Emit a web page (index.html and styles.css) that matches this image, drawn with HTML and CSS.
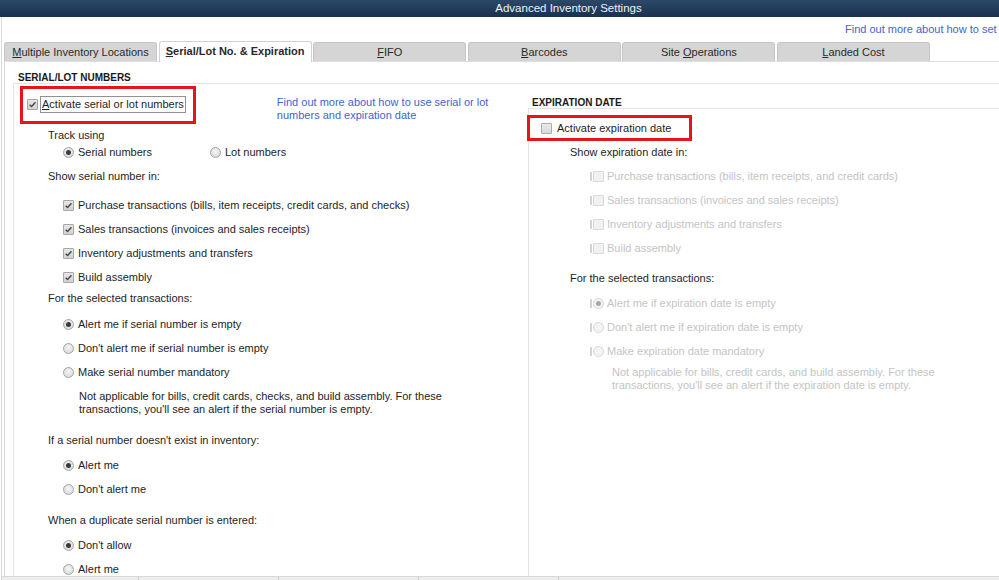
FILE: index.html
```html
<!DOCTYPE html>
<html lang="en">
<head>
    <meta charset="UTF-8">
    <title>Advanced Inventory Settings</title>
    <link rel="stylesheet" href="styles.css">
</head>
<body>
<div class="window">
    <div class="titlebar">Advanced Inventory Settings</div>
    <div class="frame">
        <div class="helpbar"><a href="#" class="link">Find out more about how to set</a></div>

        <div class="tabs">
            <div class="tab"><u>M</u>ultiple Inventory Locations</div>
            <div class="tab active"><u>S</u>erial/Lot No. &amp; Expiration</div>
            <div class="tab"><u>F</u>IFO</div>
            <div class="tab"><u>B</u>arcodes</div>
            <div class="tab">Site <u>O</u>perations</div>
            <div class="tab"><u>L</u>anded Cost</div>
        </div>

        <div class="panel">
            <div class="group-title">SERIAL/LOT NUMBERS</div>
            <div class="group">
                <!-- serial / lot numbers -->
                <div class="col-left">
                    <div class="top-row">
                        <div class="highlight">
                            <div class="opt"><span class="cb"><svg viewBox="0 0 10 10"><path d="M1.8 5.2 4 7.3 8.3 2.6"/></svg></span><span class="focus"><u>A</u>ctivate serial or lot numbers</span></div>
                        </div>
                        <a href="#" class="link help">Find out more about how to use serial or lot<br>numbers and expiration date</a>
                    </div>

                    <div class="heading mt-3">Track using</div>
                    <div class="radio-line mt-1">
                        <div class="opt wide"><span class="rb on"></span>Serial numbers</div>
                        <div class="opt"><span class="rb"></span>Lot numbers</div>
                    </div>

                    <div class="heading mt-8">Show serial number in:</div>
                    <div class="options mt-9">
                        <div class="opt"><span class="cb"><svg viewBox="0 0 10 10"><path d="M1.8 5.2 4 7.3 8.3 2.6"/></svg></span>Purchase transactions (bills, item receipts, credit cards, and checks)</div>
                        <div class="opt"><span class="cb"><svg viewBox="0 0 10 10"><path d="M1.8 5.2 4 7.3 8.3 2.6"/></svg></span>Sales transactions (invoices and sales receipts)</div>
                        <div class="opt"><span class="cb"><svg viewBox="0 0 10 10"><path d="M1.8 5.2 4 7.3 8.3 2.6"/></svg></span>Inventory adjustments and transfers</div>
                        <div class="opt"><span class="cb"><svg viewBox="0 0 10 10"><path d="M1.8 5.2 4 7.3 8.3 2.6"/></svg></span>Build assembly</div>
                    </div>

                    <div class="heading mt-1">For the selected transactions:</div>
                    <div class="options mt-6">
                        <div class="opt"><span class="rb on"></span>Alert me if serial number is empty</div>
                        <div class="opt"><span class="rb"></span>Don't alert me if serial number is empty</div>
                        <div class="opt"><span class="rb"></span>Make serial number mandatory</div>
                    </div>
                    <div class="note mt-6">Not applicable for bills, credit cards, checks, and build assembly. For these<br>transactions, you'll see an alert if the serial number is empty.</div>

                    <div class="heading mt-16">If a serial number doesn't exist in inventory:</div>
                    <div class="options mt-5">
                        <div class="opt"><span class="rb on"></span>Alert me</div>
                        <div class="opt"><span class="rb"></span>Don't alert me</div>
                    </div>

                    <div class="heading mt-11">When a duplicate serial number is entered:</div>
                    <div class="options mt-5">
                        <div class="opt"><span class="rb on"></span>Don't allow</div>
                        <div class="opt"><span class="rb"></span>Alert me</div>
                    </div>
                </div>

                <!-- expiration date -->
                <div class="col-right">
                    <div class="group-title">EXPIRATION DATE</div>
                    <div class="subgroup">
                        <div class="highlight">
                            <div class="opt"><span class="cb"></span>Activate expiration date</div>
                        </div>

                        <div class="heading mt-3">Show expiration date in:</div>
                        <div class="options dis mt-4">
                            <div class="opt"><span class="stub"></span><span class="cb"></span>Purchase transactions (bills, item receipts, and credit cards)</div>
                            <div class="opt"><span class="stub"></span><span class="cb"></span>Sales transactions (invoices and sales receipts)</div>
                            <div class="opt"><span class="stub"></span><span class="cb"></span>Inventory adjustments and transfers</div>
                            <div class="opt"><span class="stub"></span><span class="cb"></span>Build assembly</div>
                        </div>

                        <div class="heading mt-10">For the selected transactions:</div>
                        <div class="options dis mt-5">
                            <div class="opt"><span class="stub"></span><span class="rb on"></span>Alert me if expiration date is empty</div>
                            <div class="opt"><span class="stub"></span><span class="rb"></span>Don't alert me if expiration date is empty</div>
                            <div class="opt"><span class="stub"></span><span class="rb"></span>Make expiration date mandatory</div>
                        </div>
                        <div class="note dis mt-3">Not applicable for bills, credit cards, and build assembly. For these<br>transactions, you'll see an alert if the expiration date is empty.</div>
                    </div>
                </div>
            </div>
        </div>

        <div class="statusbar">
            <span class="cell first"></span>
            <span class="cell"></span>
            <span class="cell"></span>
            <span class="cell"></span>
            <span class="cell last"></span>
        </div>
    </div>
</div>
</body>
</html>
```

FILE: styles.css
```css
* {
    box-sizing: border-box;
}
html, body {
    margin: 0;
    padding: 0;
}
body {
    font-family: "Liberation Sans", Arial, sans-serif;
    font-size: 11px;
    color: #1e1e1e;
    background: #fff;
    overflow: hidden;
}
.window {
    width: 999px;
    height: 580px;
    display: flex;
    flex-direction: column;
    overflow: hidden;
}
.titlebar {
    height: 17px;
    flex: none;
    background: linear-gradient(#2c4868, #1a3150);
    color: #eef2f7;
    font-size: 11.5px;
    line-height: 17px;
    text-align: center;
    padding-left: 138px;
    white-space: nowrap;
}
.frame {
    flex: 1;
    min-height: 0;
    display: flex;
    flex-direction: column;
    margin-left: 1px;
    border-left: 1px solid #d5d9de;
}
.helpbar {
    height: 24px;
    flex: none;
    line-height: 24px;
    padding-left: 843px;
    white-space: nowrap;
    overflow: hidden;
}
.link {
    color: #3e64d3;
    text-decoration: none;
}

/* tabs */
.tabs {
    height: 20px;
    flex: none;
    display: flex;
    align-items: flex-end;
    gap: 1.6px;
    margin-left: 2px;
    position: relative;
    z-index: 1;
}
.tab {
    width: 153px;
    height: 19px;
    line-height: 18px;
    text-align: center;
    background: #d5d5d5;
    border: 1px solid #c6c6c6;
    border-bottom: none;
    border-radius: 3px 3px 0 0;
    color: #2a2a2a;
    white-space: nowrap;
}
.tab.active {
    height: 21px;
    margin-bottom: -1px;
    background: #fff;
    border-color: #d2d2d2;
    font-weight: bold;
    line-height: 19px;
}

/* panel */
.panel {
    flex: 1;
    min-height: 0;
    margin-left: 2px;
    border-left: 1px solid #d6d6d6;
    border-top: 1px solid #dedede;
    display: flex;
    flex-direction: column;
    overflow: hidden;
}
.group-title {
    margin: 10px 0 0 8px;
    padding-left: 5px;
    font-size: 10px;
    font-weight: bold;
    line-height: 11px;
    color: #1a1a1a;
}
.group {
    flex: 1;
    min-height: 0;
    margin-left: 8px;
    border-top: 1px solid #e3e3e3;
    border-left: 1px solid #e3e3e3;
    display: flex;
}
.col-left {
    width: 514px;
    flex: none;
}
.col-right {
    flex: 1;
    display: flex;
    flex-direction: column;
    padding-top: 14px;
}
.col-right .group-title {
    margin: 0;
    padding-left: 4px;
    line-height: 10px;
}
.subgroup {
    flex: 1;
    border-top: 1px solid #e3e3e3;
    border-left: 1px solid #e3e3e3;
}

.highlight {
    border: 3px solid #e8141c;
    width: fit-content;
}
.top-row {
    display: flex;
    align-items: flex-start;
    margin: 2px 0 0 6px;
}
.top-row .highlight {
    padding: 7px 7px 8px 4px;
}
.top-row .opt {
    height: 17px;
}
.top-row .cb {
    margin-right: 2px;
}
.focus {
    border: 1px solid #929292;
    padding: 0 1px;
    height: 17px;
    line-height: 15px;
}
.help {
    margin: 10px 0 0 81px;
    line-height: 13px;
}
.subgroup .highlight {
    margin: 6px 0 0 -2px;
    padding: 0 18px 0 11px;
}
.subgroup .highlight .opt {
    height: 20px;
}
.subgroup .highlight .cb {
    margin-right: 5px;
    background: linear-gradient(#eaeaea, #d9d9d9);
    border-color: #adadad;
}

/* rows */
.heading {
    line-height: 16px;
}
.col-left .heading {
    padding-left: 34px;
}
.col-right .heading {
    padding-left: 41px;
}
.col-left .options,
.radio-line {
    padding-left: 49px;
}
.col-right .options {
    padding-left: 61px;
}
.radio-line {
    display: flex;
    height: 16px;
}
.opt {
    display: flex;
    align-items: center;
    height: 24px;
    white-space: nowrap;
}
.radio-line .opt {
    height: 16px;
}
.radio-line .wide {
    width: 147px;
}
.note {
    line-height: 13px;
    white-space: nowrap;
}
.col-left .note {
    padding-left: 65px;
}
.col-right .note {
    padding-left: 83px;
}

/* checkbox + radio */
.cb {
    width: 11px;
    height: 11px;
    flex: none;
    margin-right: 4px;
    border: 1px solid #a7a7a7;
    border-radius: 1px;
    background: linear-gradient(#e6e6e6, #d3d3d3);
    display: flex;
    align-items: center;
    justify-content: center;
}
.cb svg {
    width: 9px;
    height: 9px;
    fill: none;
    stroke: #474747;
    stroke-width: 1.6;
}
.rb {
    width: 11px;
    height: 11px;
    flex: none;
    margin-right: 4px;
    border: 1px solid #a5a5a5;
    border-radius: 50%;
    background: radial-gradient(circle at 50% 40%, #f7f7f7, #d2d2d2);
    display: flex;
    align-items: center;
    justify-content: center;
}
.rb.on::after {
    content: "";
    width: 5px;
    height: 5px;
    border-radius: 50%;
    background: #3a3a3a;
}

/* disabled */
.dis {
    color: #c4c4c4;
}
.dis .cb {
    margin-right: 3px;
    border-color: #d9d9d9;
    background: #f1f1f1;
}
.dis .rb {
    margin-right: 3px;
    border-color: #d7d7d7;
    background: #f3f3f3;
}
.dis .rb.on::after {
    background: #a9a9a9;
}
.stub {
    width: 2px;
    height: 9px;
    flex: none;
    margin-right: 1px;
    background: #d4d4d4;
}

/* spacing */
.mt-1 { margin-top: 1px; }
.mt-3 { margin-top: 3px; }
.mt-4 { margin-top: 4px; }
.mt-5 { margin-top: 5px; }
.mt-6 { margin-top: 6px; }
.mt-8 { margin-top: 8px; }
.mt-9 { margin-top: 9px; }
.mt-10 { margin-top: 10px; }
.mt-11 { margin-top: 11px; }
.mt-16 { margin-top: 16px; }

/* bottom strip */
.statusbar {
    height: 4px;
    flex: none;
    display: flex;
    background: #ededed;
    border-top: 1px solid #d9d9d9;
}
.cell {
    width: 140px;
    border-left: 1px solid #cdcdcd;
}
.cell.first {
    width: 136px;
    border-left: none;
}
.cell.last {
    flex: 1;
}
```
